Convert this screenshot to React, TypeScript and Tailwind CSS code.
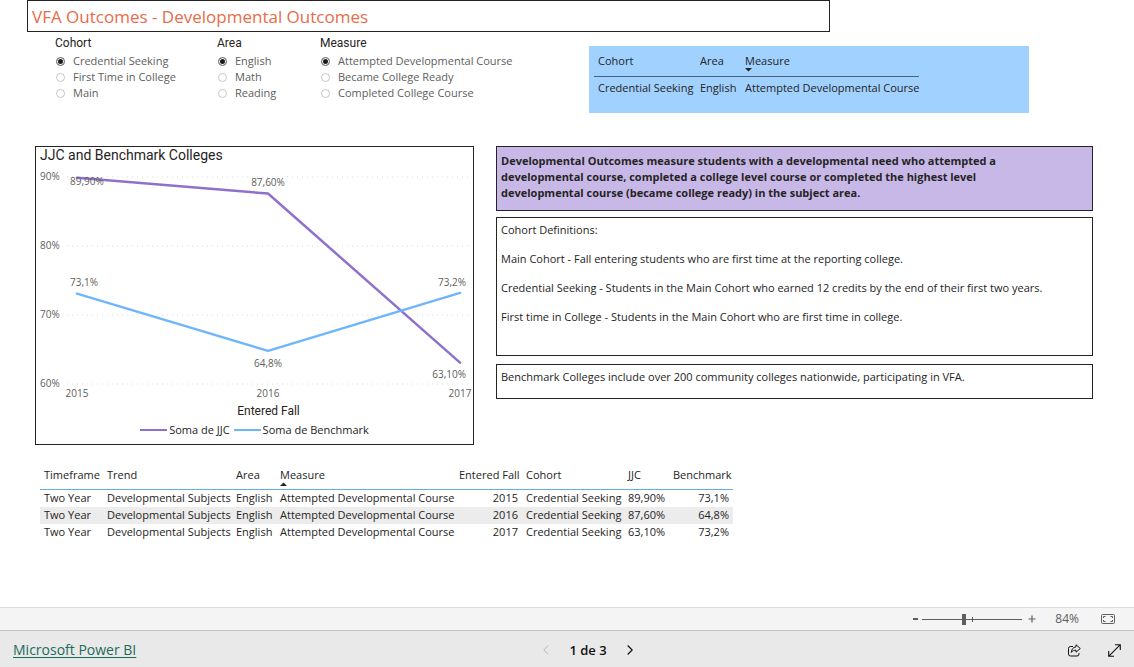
import { useState } from "react";

const slicers = [
  {
    name: "Cohort",
    width: "w-[162px]",
    options: ["Credential Seeking", "First Time in College", "Main"],
  },
  {
    name: "Area",
    width: "w-[103px]",
    options: ["English", "Math", "Reading"],
  },
  {
    name: "Measure",
    width: "w-[220px]",
    options: [
      "Attempted Developmental Course",
      "Became College Ready",
      "Completed College Course",
    ],
  },
];

const rows = [
  { year: 2015, jjc: 89.9, jjcLabel: "89,90%", benchmark: 73.1, benchmarkLabel: "73,1%" },
  { year: 2016, jjc: 87.6, jjcLabel: "87,60%", benchmark: 64.8, benchmarkLabel: "64,8%" },
  { year: 2017, jjc: 63.1, jjcLabel: "63,10%", benchmark: 73.2, benchmarkLabel: "73,2%" },
];

const definitions = [
  "Cohort Definitions:",
  "Main Cohort - Fall entering students who are first time at the reporting college.",
  "Credential Seeking - Students in the Main Cohort who earned 12 credits by the end of their first two years.",
  "First time in College - Students in the Main Cohort who are first time in college.",
];

function Slicer({ name, width, options }: { name: string; width: string; options: string[] }) {
  const [value, setValue] = useState(options[0]);

  return (
    <fieldset className={`shrink-0 ${width}`}>
      <legend className="font-['Roboto',sans-serif] text-[12px] leading-4 text-[#252423]">
        {name}
      </legend>
      <div className="mt-0.5">
        {options.map((option) => (
          <label key={option} className="flex h-4 items-center gap-2 pl-px text-[#605e5c]">
            <input
              type="radio"
              name={name}
              value={option}
              checked={value === option}
              onChange={() => setValue(option)}
              className="size-[9px] shrink-0 appearance-none rounded-full border border-[#c8c6c4] checked:border-[#8a8886] checked:bg-[#1b1a19] checked:shadow-[inset_0_0_0_1px_white]"
            />
            <span className="whitespace-nowrap">{option}</span>
          </label>
        ))}
      </div>
    </fieldset>
  );
}

function SortArrow({ up = false }: { up?: boolean }) {
  return (
    <svg viewBox="0 0 7 4" className="absolute left-1 top-full h-1 w-[7px]" aria-hidden="true">
      <path d={up ? "M0 4L3.5 0.5L7 4Z" : "M0 0H7L3.5 3.5Z"} fill="#252423" />
    </svg>
  );
}

function SelectionTable() {
  return (
    <div className="h-[67px] w-full max-w-[440px] bg-[#a0d1ff] px-[5px] pt-1.5">
      <table className="w-[325px] table-fixed text-left text-[#252423]">
        <colgroup>
          <col className="w-[102px]" />
          <col className="w-[45px]" />
          <col className="w-[178px]" />
        </colgroup>
        <thead>
          <tr className="border-b border-[#4a6178] whitespace-nowrap [&>th]:px-1 [&>th]:pb-[7px] [&>th]:pt-px [&>th]:font-normal [&>th]:leading-4">
            <th>Cohort</th>
            <th>Area</th>
            <th>
              <span className="relative -ml-1 pl-1">
                Measure
                <SortArrow />
              </span>
            </th>
          </tr>
        </thead>
        <tbody>
          <tr className="whitespace-nowrap">
            <td className="h-[22px] px-1">Credential Seeking</td>
            <td className="h-[22px] px-1">English</td>
            <td className="h-[22px] px-1">Attempted Developmental Course</td>
          </tr>
        </tbody>
      </table>
    </div>
  );
}

// plot area: 6.9 units per percentage point, 90% sits at y = 10
const yOf = (value: number) => 10 + (90 - value) * 6.9;
const xs = [41, 232, 424];
const toPoints = (values: number[]) =>
  values.map((value, i) => `${xs[i]},${yOf(value)}`).join(" ");

function LineChart() {
  return (
    <svg
      viewBox="0 0 437 233"
      className="block h-auto w-full font-['Open_Sans',sans-serif] text-[10px]"
      fill="#605e5c"
      role="img"
      aria-label="JJC and Benchmark Colleges"
    >
      {[90, 80, 70, 60].map((tick) => (
        <g key={tick}>
          <line
            x1="31"
            x2="434"
            y1={yOf(tick)}
            y2={yOf(tick)}
            stroke="#dcdcdc"
            strokeDasharray="1 4"
          />
          <text x="4" y={yOf(tick) + 3}>
            {tick}%
          </text>
        </g>
      ))}
      <polyline
        points={toPoints(rows.map((row) => row.jjc))}
        fill="none"
        stroke="#8f70cd"
        strokeWidth="2.5"
        strokeLinecap="round"
        strokeLinejoin="round"
      />
      <polyline
        points={toPoints(rows.map((row) => row.benchmark))}
        fill="none"
        stroke="#6eb6fc"
        strokeWidth="2.5"
        strokeLinecap="round"
        strokeLinejoin="round"
      />
      <text x="34" y="18">{rows[0].jjcLabel}</text>
      <text x="232" y="19" textAnchor="middle">{rows[1].jjcLabel}</text>
      <text x="430" y="211" textAnchor="end">{rows[2].jjcLabel}</text>
      <text x="34" y="119">{rows[0].benchmarkLabel}</text>
      <text x="232" y="200" textAnchor="middle">{rows[1].benchmarkLabel}</text>
      <text x="430" y="119" textAnchor="end">{rows[2].benchmarkLabel}</text>
      {rows.map((row, i) => (
        <text key={row.year} x={xs[i]} y="230" textAnchor="middle">
          {row.year}
        </text>
      ))}
    </svg>
  );
}

function ChartPanel() {
  return (
    <section className="h-[299px] border border-[#252423]">
      <h2 className="h-5 pl-1 font-['Roboto',sans-serif] text-[14px] leading-4 text-[#252423]">
        JJC and Benchmark Colleges
      </h2>
      <LineChart />
      <p className="pl-7 text-center font-['Roboto',sans-serif] text-[12px] leading-[22px] text-[#252423]">
        Entered Fall
      </p>
      <ul className="flex h-4 items-center justify-center gap-1 text-[#252423]">
        <li className="flex items-center gap-0.5">
          <span className="h-0.5 w-[27px] bg-[#8f70cd]" />
          Soma de JJC
        </li>
        <li className="flex items-center gap-0.5">
          <span className="h-0.5 w-[27px] bg-[#6eb6fc]" />
          Soma de Benchmark
        </li>
      </ul>
    </section>
  );
}

function DataTable() {
  return (
    <table className="ml-10 mt-[22px] w-[693px] table-fixed text-left text-[#252423]">
      <colgroup>
        <col className="w-[63px]" />
        <col className="w-[129px]" />
        <col className="w-[44px]" />
        <col className="w-[179px]" />
        <col className="w-[67px]" />
        <col className="w-[102px]" />
        <col className="w-[45px]" />
        <col className="w-[64px]" />
      </colgroup>
      <thead>
        <tr className="border-b border-[#66acec] whitespace-nowrap [&>th]:px-1 [&>th]:pb-1.5 [&>th]:font-normal [&>th]:leading-4">
          <th>Timeframe</th>
          <th>Trend</th>
          <th>Area</th>
          <th>
            <span className="relative -ml-1 pl-1">
              Measure
              <SortArrow up />
            </span>
          </th>
          <th className="text-right">Entered Fall</th>
          <th>Cohort</th>
          <th>JJC</th>
          <th className="text-right">Benchmark</th>
        </tr>
      </thead>
      <tbody>
        {rows.map((row) => (
          <tr
            key={row.year}
            className="whitespace-nowrap even:bg-[#ececec] [&>td]:h-[17px] [&>td]:px-1 [&>td]:leading-4"
          >
            <td>Two Year</td>
            <td>Developmental Subjects</td>
            <td>English</td>
            <td>Attempted Developmental Course</td>
            <td className="text-right">{row.year}</td>
            <td>Credential Seeking</td>
            <td>{row.jjcLabel}</td>
            <td className="text-right">{row.benchmarkLabel}</td>
          </tr>
        ))}
      </tbody>
    </table>
  );
}

function ZoomBar() {
  const [zoom, setZoom] = useState(84);

  return (
    <div className="flex h-[23px] items-center justify-end border-t border-[#dcdcdc] bg-[#f4f4f4] pr-[19px] text-[#605e5c]">
      <button
        type="button"
        aria-label="Zoom out"
        onClick={() => setZoom(Math.max(0, zoom - 10))}
        className="flex w-3 justify-center"
      >
        <svg viewBox="0 0 5 2" className="h-0.5 w-[5px]" aria-hidden="true">
          <path d="M0 0H5V2H0Z" fill="currentColor" />
        </svg>
      </button>
      <div className="relative ml-px flex h-3 w-[100px] items-center">
        <span className="absolute left-1/2 top-1 h-[5px] w-px bg-[#605e5c]" />
        <input
          type="range"
          min={0}
          max={200}
          value={zoom}
          onChange={(e) => setZoom(Number(e.target.value))}
          aria-label="Zoom"
          className="h-px w-full appearance-none bg-[#605e5c] [&::-webkit-slider-thumb]:h-[11px] [&::-webkit-slider-thumb]:w-1 [&::-webkit-slider-thumb]:appearance-none [&::-webkit-slider-thumb]:bg-[#605e5c]"
        />
      </div>
      <button
        type="button"
        aria-label="Zoom in"
        onClick={() => setZoom(Math.min(200, zoom + 10))}
        className="ml-1.5"
      >
        <svg viewBox="0 0 8 8" className="size-2" aria-hidden="true">
          <path d="M4 0.5V7.5M0.5 4H7.5" stroke="currentColor" strokeWidth="1.2" />
        </svg>
      </button>
      <span className="w-[43px] text-right text-[12px]">{zoom}%</span>
      <button type="button" aria-label="Fit to page" className="ml-[22px]">
        <svg viewBox="0 0 14 10" className="h-2.5 w-3.5" fill="none" stroke="currentColor" aria-hidden="true">
          <rect x="0.5" y="0.5" width="13" height="9" rx="1" />
          <path d="M4.5 2.5H2.5V4M9.5 2.5H11.5V4M4.5 7.5H2.5V6M9.5 7.5H11.5V6" />
        </svg>
      </button>
    </div>
  );
}

function Footer() {
  return (
    <footer className="grid h-[37px] grid-cols-[1fr_auto_1fr] items-center border-t border-[#c6c6c6] bg-[#e9e9e9] px-[13px] pt-0.5">
      <a href="#" className="justify-self-start text-[14px] text-[#1c6b5c] underline underline-offset-2">
        Microsoft Power BI
      </a>
      <nav className="ml-[42px] flex items-center gap-5 text-[13px] font-semibold text-[#111]" aria-label="Pages">
        <button type="button" aria-label="Previous page" disabled className="text-[#b8b8b8]">
          <svg viewBox="0 0 6 10" className="h-2.5 w-1.5" fill="none" stroke="currentColor" aria-hidden="true">
            <path d="M5.3 0.5L0.8 5L5.3 9.5" />
          </svg>
        </button>
        <span>1 de 3</span>
        <button type="button" aria-label="Next page">
          <svg viewBox="0 0 6 10" className="h-2.5 w-1.5" fill="none" stroke="currentColor" strokeWidth="1.2" aria-hidden="true">
            <path d="M0.7 0.5L5.2 5L0.7 9.5" />
          </svg>
        </button>
      </nav>
      <div className="flex items-center gap-[27px] justify-self-end text-[#111]">
        <button type="button" aria-label="Share">
          <svg viewBox="0 0 13 13" className="size-[13px]" fill="none" stroke="currentColor" strokeLinejoin="round" aria-hidden="true">
            <path d="M5 2.5H2.5A2 2 0 0 0 0.5 4.5V10A2 2 0 0 0 2.5 12H9A2 2 0 0 0 11 10V9" />
            <path d="M8 0.8L12.3 4.5L8 8.2V6.2C5.8 6.2 4.5 6.8 3.3 8.4C3.5 5.2 5.2 3.2 8 2.9Z" />
          </svg>
        </button>
        <button type="button" aria-label="Full screen">
          <svg viewBox="0 0 13 13" className="size-[13px]" fill="none" stroke="currentColor" strokeWidth="1.1" aria-hidden="true">
            <path d="M0.7 12.3L12.3 0.7M7 0.7H12.3V6M0.7 7V12.3H6" />
          </svg>
        </button>
      </div>
    </footer>
  );
}

export default function App() {
  return (
    <div className="flex min-h-screen flex-col bg-white font-['Open_Sans',sans-serif] text-[11px] leading-4">
      <main className="flex-1">
        <header className="ml-[27px] h-8 max-w-[803px] border border-[#252423] pl-1">
          <h1 className="pt-0.5 text-[17px] leading-7 text-[#e66c4a]">
            VFA Outcomes - Developmental Outcomes
          </h1>
        </header>

        <div className="flex h-[114px] pl-[55px] pr-[41px]">
          <div className="flex w-[534px] shrink-0 pt-[3px]">
            {slicers.map((slicer) => (
              <Slicer key={slicer.name} {...slicer} />
            ))}
          </div>
          <div className="flex-1 pt-3.5">
            <SelectionTable />
          </div>
        </div>

        <div className="grid grid-cols-[439fr_597fr] items-start gap-[22px] pl-[35px] pr-[41px]">
          <ChartPanel />
          <div className="flex flex-col text-[#252423]">
            <p className="h-[65px] border border-[#252423] bg-[#c8b8e8] py-1.5 pl-1 pr-8 font-bold">
              Developmental Outcomes measure students with a developmental need who attempted a
              developmental course, completed a college level course or completed the highest level
              developmental course (became college ready) in the subject area.
            </p>
            <div className="mt-1.5 flex h-[139px] flex-col gap-[13px] border border-[#252423] px-1 pt-1">
              {definitions.map((text) => (
                <p key={text}>{text}</p>
              ))}
            </div>
            <p className="mt-2 h-[35px] border border-[#252423] px-1 pt-1">
              Benchmark Colleges include over 200 community colleges nationwide, participating in
              VFA.
            </p>
          </div>
        </div>

        <DataTable />
      </main>

      <ZoomBar />
      <Footer />
    </div>
  );
}
